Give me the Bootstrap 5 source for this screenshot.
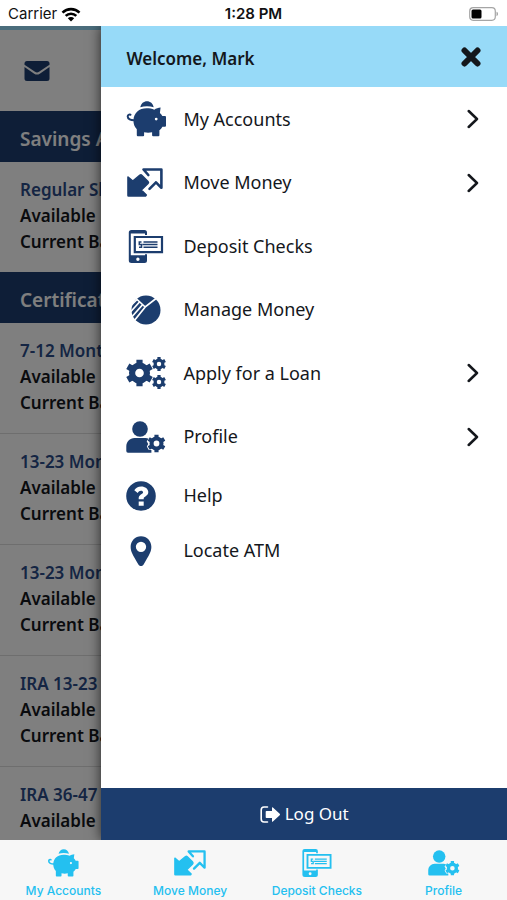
<!DOCTYPE html>
<html lang="en">
<head>
<meta charset="utf-8">
<meta name="viewport" content="width=device-width, initial-scale=1">
<title>Mobile Banking</title>
<link href="https://cdn.jsdelivr.net/npm/bootstrap@5.3.0/dist/css/bootstrap.min.css" rel="stylesheet">
<style>
:root { --navy: #1c3d6e; --sky: #97daf8; --cyan: #24c0f0; --ink: #14171c; }
body { font-family: "Noto Sans", "Open Sans", sans-serif; color: var(--ink); }
.status-bar { height: 26px; padding: 2px 8px 0; font-family: Inter, sans-serif; font-size: 15px; color: #111; }
.status-bar > * { flex: 1 1 0; }
.stage { min-height: 0; }
.accounts-head { height: 85px; border-top: 4px solid var(--sky); padding: 0 24px; color: var(--navy); }
.section-title { height: 51px; padding: 5px 20px 0; background: var(--navy); color: #fff; font-size: 19px; font-weight: 600; margin: 0; }
.account { padding: 15px 20px 17px; font-size: 17px; line-height: 26px; font-weight: 600; white-space: nowrap; }
.account + .account { border-top: 1px solid #dcdcdc; }
.account a { color: #2a4a86; text-decoration: none; }
.scrim { background: rgba(0, 0, 0, .5); }
.drawer { width: 80%; box-shadow: 0 0 12px rgba(0, 0, 0, .7); }
.drawer-head { height: 61px; padding: 5px 24px 0 25px; background: var(--sky); }
.drawer-head h1 { font-size: 17px; font-weight: 600; margin: 0; }
.icon-btn { padding: 0; border: 0; background: none; color: inherit; line-height: 0; }
.menu-row { height: 63px; padding: 0 28px 0 25px; font-size: 18px; color: var(--ink); text-decoration: none; }
.menu-row:nth-child(odd) { height: 64px; }
.menu-row.compact { height: 55px; }
.menu-icon { width: 57px; color: var(--navy); line-height: 0; }
.logout { height: 52px; background: var(--navy); color: #fff; border: 0; font-size: 17px; }
.tab-bar { height: 60px; background: #f7f7f7; }
.tab-link { color: var(--cyan); text-decoration: none; font-family: Inter, sans-serif; font-size: 12px; font-weight: 500; line-height: 16px; padding-top: 9px; }
.tab-link svg { height: 28px; margin-bottom: 6px; }
svg { display: block; flex: none; }
</style>
<script src="https://cdn.jsdelivr.net/npm/bootstrap@5.3.0/dist/js/bootstrap.bundle.min.js"></script>
</head>
<body class="vh-100 d-flex flex-column overflow-hidden bg-white">
<svg width="0" height="0" class="position-absolute" aria-hidden="true">
  <symbol id="pig" viewBox="0 0 40 36">
    <path fill="currentColor" d="M14.3 6.2C15 2.400 17.700.2 21 .2s6 2.200 6.700 6C23.500 5 18.500 5 14.300 6.200z"/>
    <path fill="currentColor" fill-rule="evenodd" d="M20.500 7.300c3 0 5.600.4 7.800 1.400 1.800-1.200 4-2 6.300-2.100l-.7 5.400c1.200 1 1.900 1.900 2.400 3H39q1 0 1 1v8.700q0 1-1 1h-2.600c-.8 1.500-1.700 2.500-3 3.500v5.100q0 1-1 1h-5.300q-1 0-1-1v-3c-2.400.5-5.600.5-8 0v3q0 1-1 1h-5.300q-1 0-1-1v-6.100C8.500 26 7.300 22.800 7.500 19c.3-7 5.700-11.700 13-11.700zM30.200 16.700a1.400 1.400 0 1 0 0 2.800 1.400 1.400 0 1 0 0-2.800z"/>
    <path fill="none" stroke="currentColor" stroke-width="2" stroke-linecap="round" d="M8.500 19.300C4.800 19.500 1.700 18 1.700 15.500c0-1.700 1.500-2.300 2.800-1.800"/>
  </symbol>
  <symbol id="move" viewBox="0 0 36 29">
    <path fill="currentColor" stroke="currentColor" stroke-width="1.600" stroke-linejoin="round" d="M1 9l4.800 4.200L13 7.200q1-.7 2 .3l6 6q.9 1 0 2L14.300 22l5 5-.8.900H1.500q-.5 0-.5-.5z"/>
    <path fill="none" stroke="currentColor" stroke-width="2.600" stroke-linejoin="round" stroke-linecap="round" d="M21.300 7L16.500 1.500h17.900v18.300l-5.400-5.500-6.500 6.500"/>
  </symbol>
  <symbol id="check" viewBox="0 0 35 33">
    <path fill="currentColor" fill-rule="evenodd" d="M3 0h13q2.500 0 2.500 2.500V5h-2V3.500H2.300v21.700h14.200V24.300h2v6.200q0 2.500-2.500 2.500H3Q.3 33 .3 30.500v-28Q.3 0 3 0zm6.400 27.500a1.700 1.700 0 1 0 0 3.400 1.700 1.700 0 1 0 0-3.400z"/>
    <path fill="none" stroke="currentColor" stroke-width="2.200" d="M6.300 7h27.200v15.200H6.300z"/>
    <path fill="none" stroke="currentColor" stroke-width="1.500" d="M15 12H29M14 14.600H29M15 17.200H29M13 12h-2.200v2.600H13v2.600h-2.500"/>
  </symbol>
  <symbol id="manage" viewBox="0 0 30 30">
    <mask id="cut"><path fill="#fff" d="M0 0h30v30H0z"/>
      <path fill="none" stroke="#000" stroke-width="1.700" d="M4.500 3L14.200 12 27 2M14.200 12L3 26M0 10.500l5.500-5.500M-1 17.500L8.500 7M-1 24L11.300 10"/></mask>
    <circle cx="15" cy="15" r="14.500" fill="currentColor" mask="url(#cut)"/>
  </symbol>
  <symbol id="gear" viewBox="-10 -10 20 20">
    <circle r="5.500" fill="none" stroke="currentColor" stroke-width="4.600"/>
    <path fill="none" stroke="currentColor" stroke-width="4.600" d="M0-6V-10M0 6V10M5.200-3L8.660-5M5.200 3L8.660 5M-5.200-3L-8.660-5M-5.200 3L-8.660 5"/>
  </symbol>
  <symbol id="gears" viewBox="0 0 40 32">
    <use href="#gear" x="0" y="2.500" width="27" height="27"/>
    <use href="#gear" x="26" y="0" width="14" height="14"/>
    <use href="#gear" x="26" y="18" width="14" height="14"/>
  </symbol>
  <symbol id="person" viewBox="0 0 40 32">
    <circle cx="14" cy="8" r="7.800" fill="currentColor"/>
    <path fill="currentColor" d="M8.500 17h11q1.800 0 3.100.7l-1.900 2.600 1.500 2.700-1.400 2.500 2 3.500h2.600v2.700H2Q.3 31.700.3 30v-4.500C.3 20.700 3.800 17 8.500 17z"/>
    <use href="#gear" x="21.500" y="13.500" width="18" height="18"/>
  </symbol>
  <symbol id="help" viewBox="0 0 30 30">
    <path fill="currentColor" fill-rule="evenodd" d="M15 .2a14.800 14.800 0 1 0 0 29.600 14.800 14.800 0 1 0 0-29.600zM8.300 9.300C9.700 6.700 12 5.400 15.200 5.400c4 0 7.100 2.300 7.100 5.700 0 4.200-4.600 4.500-4.600 6.400v.8h-5v-1.200c0-3.800 4.400-3.900 4.400-5.700 0-1-.9-1.600-2.100-1.600-1.500 0-2.400.8-3.300 2.100zM12.700 20.400h5v4.400h-5z"/>
  </symbol>
  <symbol id="pin" viewBox="0 0 384 512">
    <path fill="currentColor" d="M150 490C50 320 15 270 15 185 15 86 92 5 192 5s177 81 177 180c0 85-35 135-135 305-20 29-64 29-84 0zM192 272a88 88 0 1 0 0-176 88 88 0 1 0 0 176z"/>
  </symbol>
  <symbol id="chev" viewBox="0 0 12 20">
    <path fill="none" stroke="currentColor" stroke-width="2.500" stroke-linecap="round" stroke-linejoin="round" d="M1.700 2l8.300 8-8.300 8"/>
  </symbol>
</svg>

<header class="status-bar flex-shrink-0 d-flex align-items-center">
  <div class="d-flex align-items-center gap-1">
    <span>Carrier</span>
    <svg width="20" height="15" viewBox="0 0 20 15" fill="none" stroke="#000" stroke-width="2.600" role="img" aria-label="Wi-Fi">
      <path d="M1.500 5.600a12.200 12.200 0 0 1 17 0M4.700 8.900a7.600 7.600 0 0 1 10.600 0"/><path fill="#000" stroke="none" d="M10 14.500l-3.200-3.300a4.600 4.600 0 0 1 6.400 0z"/>
    </svg>
  </div>
  <div class="fw-semibold text-center">1:28 PM</div>
  <div class="d-flex justify-content-end">
    <svg width="30" height="14" viewBox="0 0 30 14" role="img" aria-label="Battery">
      <rect x=".7" y=".7" width="25.600" height="12.600" rx="3.500" fill="none" stroke="#a5a5a5" stroke-width="1.200"/><rect x="2.500" y="2.500" width="10" height="9" rx="1.500"/><path fill="#a5a5a5" d="M27.500 4.800c2 .6 2 3.800 0 4.400z"/>
    </svg>
  </div>
</header>

<div class="stage flex-grow-1 position-relative overflow-hidden">
  <main>
    <div class="accounts-head d-flex align-items-center">
      <button class="icon-btn" type="button" aria-label="Messages">
        <svg width="26" height="20" viewBox="0 0 26 20" fill="currentColor"><path d="M3 0h20q2.500 0 2.500 2.500v1.200L15 10.800q-2 1.300-4 0L.5 3.700V2.500Q.5 0 3 0z"/><path d="M.5 6l9.700 6.700q2.800 1.800 5.600 0L25.500 6v11.500q0 2.500-2.500 2.500H3Q.5 20 .5 17.500z"/></svg>
      </button>
    </div>
    <h2 class="section-title d-flex align-items-center">Savings Accounts</h2>
    <div class="account"><a href="#">Regular Share</a><div>Available Balance</div><div>Current Balance</div></div>
    <h2 class="section-title d-flex align-items-center">Certificates</h2>
    <div class="account"><a href="#">7-12 Month</a><div>Available Balance</div><div>Current Balance</div></div>
    <div class="account"><a href="#">13-23 Month</a><div>Available Balance</div><div>Current Balance</div></div>
    <div class="account"><a href="#">13-23 Month</a><div>Available Balance</div><div>Current Balance</div></div>
    <div class="account"><a href="#">IRA 13-23 Month</a><div>Available Balance</div><div>Current Balance</div></div>
    <div class="account"><a href="#">IRA 36-47 Month</a><div>Available Balance</div></div>
  </main>
  <div class="scrim position-absolute top-0 start-0 w-100 h-100"></div>
  <aside class="drawer position-absolute top-0 end-0 h-100 bg-white d-flex flex-column">
    <div class="drawer-head flex-shrink-0 d-flex align-items-center justify-content-between">
      <h1>Welcome, Mark</h1>
      <button class="icon-btn pb-1" type="button" aria-label="Close menu">
        <svg width="24" height="20" viewBox="0 0 24 20" fill="none" stroke="currentColor" stroke-width="6" stroke-linecap="round"><path d="M5.500 3.500l13 13M18.500 3.500l-13 13"/></svg>
      </button>
    </div>
    <nav class="flex-grow-1" aria-label="Main menu">
      <a class="menu-row d-flex align-items-center" href="#"><span class="menu-icon"><svg width="40" height="36"><use href="#pig"/></svg></span><span class="flex-grow-1">My Accounts</span><svg width="12" height="20"><use href="#chev"/></svg></a>
      <a class="menu-row d-flex align-items-center" href="#"><span class="menu-icon"><svg width="38" height="29"><use href="#move"/></svg></span><span class="flex-grow-1">Move Money</span><svg width="12" height="20"><use href="#chev"/></svg></a>
      <a class="menu-row d-flex align-items-center" href="#"><span class="menu-icon"><svg width="40" height="33"><use href="#check"/></svg></span><span>Deposit Checks</span></a>
      <a class="menu-row d-flex align-items-center" href="#"><span class="menu-icon"><svg width="40" height="30"><use href="#manage"/></svg></span><span>Manage Money</span></a>
      <a class="menu-row d-flex align-items-center" href="#"><span class="menu-icon"><svg width="40" height="32"><use href="#gears"/></svg></span><span class="flex-grow-1">Apply for a Loan</span><svg width="12" height="20"><use href="#chev"/></svg></a>
      <a class="menu-row d-flex align-items-center" href="#"><span class="menu-icon"><svg width="40" height="32"><use href="#person"/></svg></span><span class="flex-grow-1">Profile</span><svg width="12" height="20"><use href="#chev"/></svg></a>
      <a class="menu-row compact d-flex align-items-center" href="#"><span class="menu-icon"><svg width="30" height="30"><use href="#help"/></svg></span><span>Help</span></a>
      <a class="menu-row compact d-flex align-items-center" href="#"><span class="menu-icon"><svg width="30" height="30"><use href="#pin"/></svg></span><span>Locate ATM</span></a>
    </nav>
    <button class="logout d-flex align-items-center justify-content-center gap-1" type="button">
      <svg width="21" height="17" viewBox="0 0 21 17"><path fill="none" stroke="#fff" stroke-width="1.600" stroke-linecap="round" d="M7.500 1H4Q1.200 1 1.200 4v9q0 3 2.800 3h3.500"/><path fill="#fff" d="M12 1.800q0-1 .9-.3l6.800 6.300q.7.700 0 1.400l-6.800 6.300q-.9.700-.9-.3V12H6.500q-.8 0-.8-.8V5.800q0-.8.8-.8H12z"/></svg>
      <span>Log Out</span>
    </button>
  </aside>
</div>

<nav class="tab-bar flex-shrink-0 d-flex" aria-label="Tabs">
  <a class="tab-link col-3 d-flex flex-column align-items-center" href="#"><svg width="32"><use href="#pig"/></svg>My Accounts</a>
  <a class="tab-link col-3 d-flex flex-column align-items-center" href="#"><svg width="32"><use href="#move"/></svg>Move Money</a>
  <a class="tab-link col-3 d-flex flex-column align-items-center" href="#"><svg width="32"><use href="#check"/></svg>Deposit Checks</a>
  <a class="tab-link col-3 d-flex flex-column align-items-center" href="#"><svg width="32"><use href="#person"/></svg>Profile</a>
</nav>
</body>
</html>
